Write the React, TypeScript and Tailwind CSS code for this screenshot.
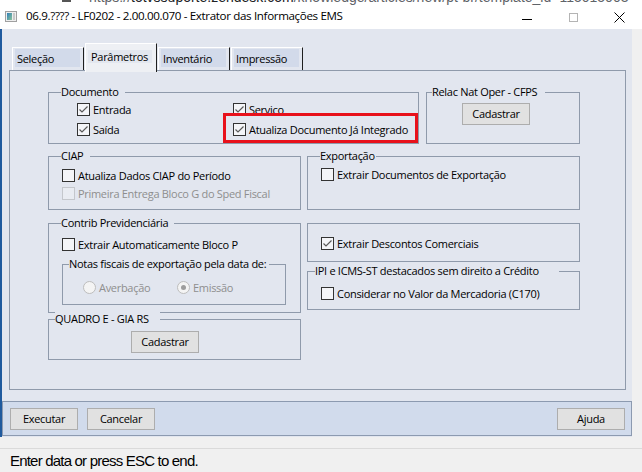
import type { ReactNode } from "react";

// Extrator das Informações EMS - janela Parâmetros

const BG = "bg-[#e2e6ef]";

function Check({ checked = false, disabled = false }: { checked?: boolean; disabled?: boolean }) {
  return (
    <span
      className={
        "flex h-[13px] w-[13px] shrink-0 items-center justify-center border " +
        (disabled ? "border-[#c4c7cc] bg-[#e9ecf2]" : "border-[#333333] bg-[#f4f5f8]")
      }
    >
      {checked && (
        <svg width="11" height="11" viewBox="0 0 11 11">
          <path d="M1.5 5.5 L4 8 L9.5 2.5" fill="none" stroke="#5a5a5a" strokeWidth="1.2" />
        </svg>
      )}
    </span>
  );
}

function CheckItem({ label, checked, disabled }: { label: string; checked?: boolean; disabled?: boolean }) {
  return (
    <div className="flex h-[13px] items-center gap-[3px] whitespace-nowrap leading-[13px]">
      <Check checked={checked} disabled={disabled} />
      <span className={disabled ? "text-[#8e8e8e]" : "text-black"}>{label}</span>
    </div>
  );
}

function Radio({ label, selected }: { label: string; selected?: boolean }) {
  return (
    <div className="flex h-[13px] w-[94px] items-center gap-[3px] whitespace-nowrap leading-[13px] text-[#8e8e8e]">
      <span className="flex h-[13px] w-[13px] shrink-0 items-center justify-center rounded-full border border-[#bdbdbd] bg-[#f4f4f4]">
        {selected && <span className="h-[5px] w-[5px] rounded-full bg-[#9d9d9d]" />}
      </span>
      <span>{label}</span>
    </div>
  );
}

function Button({ children, className = "" }: { children: ReactNode; className?: string }) {
  return (
    <div
      className={
        "flex h-[22px] w-[68px] shrink-0 items-center justify-center border border-[#adadad] bg-[#e1e1e1] leading-[14px] text-black " +
        className
      }
    >
      {children}
    </div>
  );
}

function Group({
  label,
  labelClass = "",
  className,
  children,
}: {
  label?: string;
  labelClass?: string;
  className: string;
  children: ReactNode;
}) {
  return (
    <div className={"relative shrink-0 border border-[#8f9aab] " + className}>
      {label && (
        <span
          className={
            "absolute -top-[9px] h-[15px] whitespace-nowrap leading-[15px] text-black " + BG + " " + labelClass
          }
        >
          {label}
        </span>
      )}
      {children}
    </div>
  );
}

function Tab({ label, active }: { label: string; active?: boolean }) {
  if (active) {
    return (
      <div className="relative z-10 h-[29px] w-[72px] border-l border-t border-r border-white border-r-[#1f1f1f] bg-[#eef0f4]">
        <div className="ml-[2px] mt-[6px] h-[13px] w-[64px] bg-[#e3e7ef] pl-[3px] leading-[13px] text-black">
          {label}
        </div>
      </div>
    );
  }
  return (
    <div className="mt-[4px] h-[23px] w-[72px] border-l border-t border-r border-white border-r-[#1f1f1f]">
      <div className="ml-[2px] mt-[1px] h-[18px] w-[65px] bg-[#d2daea] pl-[2px] pt-[2px] leading-[16px] text-black">
        {label}
      </div>
    </div>
  );
}

export default function App() {
  return (
    <div className="flex h-[472px] w-[642px] flex-col overflow-hidden bg-[#f0f0f0] font-['Open_Sans',sans-serif] text-[11px] tracking-[-0.3px]">
      {/* faixa do navegador atrás da janela */}
      <div className="h-[5px] shrink-0 overflow-hidden bg-white">
        <div className="-mt-[11px] flex items-center whitespace-nowrap pl-[62px] font-['Liberation_Sans',sans-serif] text-[14px] leading-[16px] tracking-normal text-[#5f6368]">
          <span className="mr-[18px] inline-block h-[10px] w-[9px] bg-[#555]" />
          https://<span className="text-[#202124]">totvssuporte.zendesk.com</span>/knowledge/articles/new/pt-br/template_id=115015003
        </div>
      </div>

      {/* barra de título */}
      <div className="flex h-[24px] shrink-0 items-center bg-white">
        <svg className="ml-[5px] -mt-[1px]" width="12" height="11" viewBox="0 0 12 11">
          <defs>
            <linearGradient id="ico" x1="0" y1="0" x2="1" y2="1">
              <stop offset="0" stopColor="#2f7fb8" />
              <stop offset="1" stopColor="#8cc49a" />
            </linearGradient>
          </defs>
          <rect x="0.5" y="0.5" width="11" height="10" fill="#eeeeee" stroke="#a0a0a0" />
          <rect x="2" y="2" width="5" height="7" fill="url(#ico)" />
          <rect x="8" y="2" width="2" height="7" fill="#c8c8c8" />
        </svg>
        <span className="ml-[9px] -mt-[2px] flex-1 whitespace-nowrap text-[11.6px] tracking-[-0.35px] text-black">
          06.9.???? - LF0202 - 2.00.00.070 - Extrator das Informações EMS
        </span>
        <div className="flex h-full w-[46px] items-center justify-center">
          <span className="mt-[4px] h-px w-[10px] bg-black" />
        </div>
        <div className="flex h-full w-[46px] items-center justify-center">
          <span className="h-[9px] w-[9px] border border-[#b4b4b4]" />
        </div>
        <div className="flex h-full w-[46px] items-center justify-center">
          <svg width="11" height="11" viewBox="0 0 11 11">
            <path d="M0.5 0.5 L10.5 10.5 M10.5 0.5 L0.5 10.5" stroke="#000" strokeWidth="1" />
          </svg>
        </div>
      </div>

      {/* corpo da janela */}
      <div className="flex h-[408px] shrink-0">
        <div className="w-[2px] bg-[#1f5a9e]" />
        <div className={"flex w-[630px] flex-col " + BG}>
          {/* abas */}
          <div className="ml-[10px] mt-[14px] flex h-[27px] items-start gap-px">
            <Tab label="Seleção" />
            <Tab label="Parâmetros" active />
            <Tab label="Inventário" />
            <Tab label="Impressão" />
          </div>

          {/* painel da aba */}
          <div className="ml-[7px] h-[320px] w-[617px] border border-[#8f9aab] pl-[38px] pt-[21px]">
            <div className="flex gap-[7px]">
              <Group label="Documento" labelClass="left-[12px] w-[64px]" className="h-[52px] w-[371px]">
                <div className="grid grid-cols-[156px_auto] gap-y-[7px] pl-[28px] pt-[10px]">
                  <CheckItem label="Entrada" checked />
                  <CheckItem label="Servico" checked />
                  <CheckItem label="Saída" checked />
                  <CheckItem label="Atualiza Documento Já Integrado" checked />
                </div>
                {/* destaque vermelho */}
                <div className="absolute left-[174px] top-[20px] h-[30px] w-[195px] border-[3px] border-[#e8111b]" />
              </Group>
              <Group label="Relac Nat Oper - CFPS" labelClass="left-[5px] w-[113px]" className="h-[52px] w-[154px]">
                <div className="pl-[35px] pt-[10px]">
                  <Button>Cadastrar</Button>
                </div>
              </Group>
            </div>

            <div className="mt-[12px] flex gap-[6px]">
              <Group label="CIAP" labelClass="left-[12px] w-[29px]" className="h-[54px] w-[253px]">
                <div className="flex flex-col gap-[5px] pl-[13px] pt-[12px]">
                  <CheckItem label="Atualiza Dados CIAP do Período" />
                  <CheckItem label="Primeira Entrega Bloco G do Sped Fiscal" disabled />
                </div>
              </Group>
              <Group label="Exportação" labelClass="left-[12px] w-[56px]" className="h-[54px] w-[273px]">
                <div className="pl-[13px] pt-[11px]">
                  <CheckItem label="Extrair Documentos de Exportação" />
                </div>
              </Group>
            </div>

            <div className="mt-[13px] flex items-start gap-[6px]">
              <div className="flex flex-col gap-[6px]">
                <Group label="Contrib Previdenciária" labelClass="left-[12px] w-[113px]" className="h-[90px] w-[253px]">
                  <div className="pl-[13px] pt-[14px]">
                    <CheckItem label="Extrair Automaticamente Bloco P" />
                    <Group
                      label="Notas fiscais de exportação pela data de:"
                      labelClass="left-[6px] w-[200px]"
                      className="mt-[13px] h-[41px] w-[224px]"
                    >
                      <div className="flex pl-[20px] pt-[16px]">
                        <Radio label="Averbação" />
                        <Radio label="Emissão" selected />
                      </div>
                    </Group>
                  </div>
                </Group>
                <Group label="QUADRO E - GIA RS" labelClass="left-[6px] w-[105px]" className="h-[41px] w-[253px]">
                  <div className="pl-[82px] pt-[11px]">
                    <Button>Cadastrar</Button>
                  </div>
                </Group>
              </div>
              <div className="flex flex-col gap-[9px]">
                <Group className="h-[39px] w-[273px]">
                  <div className="pl-[13px] pt-[13px]">
                    <CheckItem label="Extrair Descontos Comerciais" checked />
                  </div>
                </Group>
                <Group
                  label="IPI e ICMS-ST destacados sem direito a Crédito"
                  labelClass="left-[7px] w-[244px]"
                  className="h-[39px] w-[273px]"
                >
                  <div className="pl-[13px] pt-[15px]">
                    <CheckItem label="Considerar no Valor da Mercadoria (C170)" />
                  </div>
                </Group>
              </div>
            </div>
          </div>

          {/* barra de botões */}
          <div className="mt-[11px] flex h-[35px] items-start border border-[#8c9ab0] bg-[#d1dbec] pl-[7px] pr-[6px] pt-[6px]">
            <Button>Executar</Button>
            <Button className="ml-[9px]">Cancelar</Button>
            <div className="flex-1" />
            <Button>Ajuda</Button>
          </div>
        </div>
        <div className="flex-1 bg-[#f0f0f0]" />
      </div>

      {/* barra de status */}
      <div className="mt-px flex-1 pt-[10px]">
        <div className="h-full border-t border-[#dadada] pl-[10px] pt-[3px] font-['Liberation_Sans',sans-serif] text-[15px] leading-[18px] tracking-[-0.8px] text-black">
          Enter data or press ESC to end.
        </div>
      </div>
    </div>
  );
}
